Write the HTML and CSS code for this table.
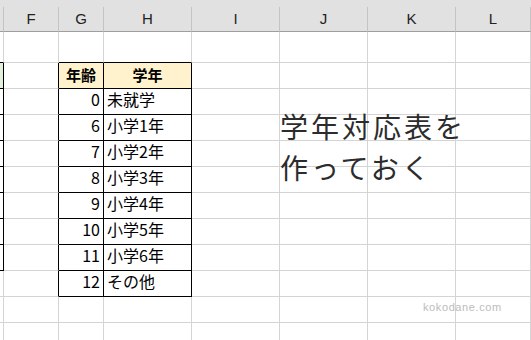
FILE: index.html
```html
<!DOCTYPE html>
<html lang="ja">
<head>
<meta charset="utf-8">
<title>学年対応表</title>
<link rel="stylesheet" href="styles.css">
</head>
<body>
<div class="sheet">
  <div class="topstrip"></div>
  <div class="grid">
    <!-- column headers -->
    <div class="ch"></div><div class="ch">F</div><div class="ch">G</div><div class="ch">H</div><div class="ch">I</div><div class="ch">J</div><div class="ch">K</div><div class="ch">L</div>
    <!-- row 1 -->
    <div class="c bb"></div><div class="c"></div><div class="c bb"></div><div class="c bb"></div><div class="c"></div><div class="c"></div><div class="c"></div><div class="c"></div>
    <!-- row 2 -->
    <div class="c grn br bb"></div><div class="c br"></div><div class="c hd br bb">年齢</div><div class="c hd br bb">学年</div><div class="c"></div><div class="c"></div><div class="c"></div><div class="c"></div>
    <!-- data rows -->
    <div class="c br bb"></div><div class="c br"></div><div class="c num br bb">0</div><div class="c txt br bb">未就学</div><div class="c"></div><div class="c"></div><div class="c"></div><div class="c"></div>
    <div class="c br bb"></div><div class="c br"></div><div class="c num br bb">6</div><div class="c txt br bb">小学1年</div><div class="c"></div><div class="c"></div><div class="c"></div><div class="c"></div>
    <div class="c br bb"></div><div class="c br"></div><div class="c num br bb">7</div><div class="c txt br bb">小学2年</div><div class="c"></div><div class="c"></div><div class="c"></div><div class="c"></div>
    <div class="c br bb"></div><div class="c br"></div><div class="c num br bb">8</div><div class="c txt br bb">小学3年</div><div class="c"></div><div class="c"></div><div class="c"></div><div class="c"></div>
    <div class="c br bb"></div><div class="c br"></div><div class="c num br bb">9</div><div class="c txt br bb">小学4年</div><div class="c"></div><div class="c"></div><div class="c"></div><div class="c"></div>
    <div class="c br bb"></div><div class="c br"></div><div class="c num br bb">10</div><div class="c txt br bb">小学5年</div><div class="c"></div><div class="c"></div><div class="c"></div><div class="c"></div>
    <div class="c br bb"></div><div class="c br"></div><div class="c num br bb">11</div><div class="c txt br bb">小学6年</div><div class="c"></div><div class="c"></div><div class="c"></div><div class="c"></div>
    <div class="c"></div><div class="c br"></div><div class="c num br bb">12</div><div class="c txt br bb">その他</div><div class="c"></div><div class="c"></div><div class="c"></div><div class="c"></div>
    <!-- empty rows -->
    <div class="c"></div><div class="c"></div><div class="c"></div><div class="c"></div><div class="c"></div><div class="c"></div><div class="c"></div><div class="c"></div>
    <div class="c"></div><div class="c"></div><div class="c"></div><div class="c"></div><div class="c"></div><div class="c"></div><div class="c"></div><div class="c"></div>
  </div>
  <div class="note">学年対応表を<br>作っておく</div>
  <div class="mark">kokodane.com</div>
</div>
</body>
</html>
```
FILE: styles.css
```css
html, body {
  margin: 0;
  padding: 0;
  background: #ffffff;
  overflow: hidden;
}
.sheet {
  position: relative;
  width: 531px;
  height: 340px;
  overflow: hidden;
  font-family: "Noto Sans CJK JP", "Noto Sans", sans-serif;
  color: #000;
}
.topstrip {
  height: 7px;
  background: #e1e1e1;
}
.grid {
  display: grid;
  grid-template-columns: 4px 55px 45px 88px 88px 88px 88px 1fr;
  grid-template-rows: 25px 31px repeat(11, 26px);
}
.ch {
  box-sizing: border-box;
  background: #e1e1e1;
  border-right: 1px solid #c4c4c4;
  border-bottom: 1px solid #9e9e9e;
  font-family: "Liberation Sans", "Noto Sans", sans-serif;
  font-size: 15px;
  line-height: 24px;
  text-align: center;
  color: #222;
}
.c {
  box-sizing: border-box;
  border-right: 1px solid #d4d4d4;
  border-bottom: 1px solid #d4d4d4;
  font-size: 16px;
  line-height: 20px;
  white-space: nowrap;
}
.c.br { border-right-color: #000; }
.c.bb { border-bottom-color: #000; }
.grn { background: #e2efda; }
.hd {
  background: #fff2cc;
  font-weight: bold;
  font-size: 15px;
  line-height: 24px;
  text-align: center;
}
.num {
  text-align: right;
  padding-right: 3px;
}
.txt {
  padding-left: 3px;
}
.note {
  position: absolute;
  left: 280px;
  top: 106px;
  font-size: 28px;
  line-height: 41px;
  letter-spacing: 3px;
  color: #2c2c2c;
}
.mark {
  position: absolute;
  left: 423px;
  top: 301px;
  font-family: "Liberation Sans", sans-serif;
  font-size: 11px;
  letter-spacing: 0.6px;
  color: #bcbcbc;
}
```
